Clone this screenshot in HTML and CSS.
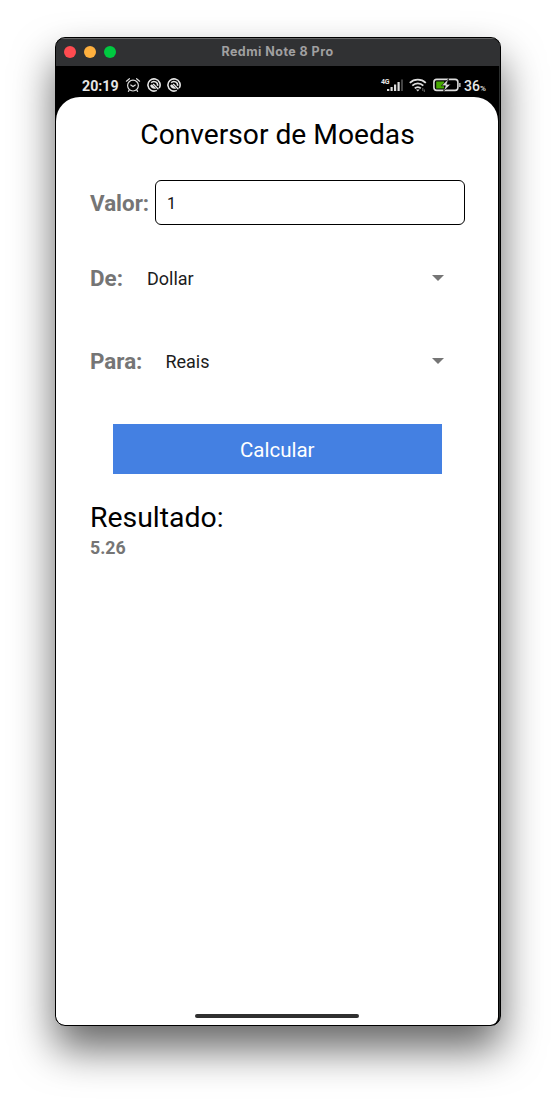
FILE: index.html
```html
<!DOCTYPE html>
<html lang="pt-BR">
<head>
<meta charset="utf-8">
<title>Conversor de Moedas</title>
<link rel="stylesheet" href="styles.css">
</head>
<body>
<div class="window">
  <header class="titlebar">
    <div class="lights"><i class="light red"></i><i class="light amber"></i><i class="light green"></i></div>
    <span class="device">Redmi Note 8 Pro</span>
  </header>
  <div class="phone">
    <div class="status">
      <span class="clock">20:19</span>
      <svg class="alarm" width="16" height="16" viewBox="0 0 16 16" fill="none" stroke="#ddd" stroke-width="1.2" stroke-linecap="round"><circle cx="8" cy="8.6" r="5.4"/><path d="M1.4 4.2 4.4 1.7M14.6 4.2 11.6 1.7M5.8 8l2.2 1.6L10.3 8M4.2 13.2 3.4 14.3M11.8 13.2l.8 1.1"/></svg>
      <svg class="badge" width="14" height="14" viewBox="0 0 14 14" fill="none" stroke="#e6e6e6"><path stroke-width="1.6" d="M9.8 12.4A6.1 6.1 0 1 1 12.2 10.2"/><path stroke-width="1.5" d="M4.2 4.8A3.7 3.7 0 0 1 10.6 7.8"/><path d="M6.2 6 11.4 11.2" stroke-width="1.3"/><path d="M3.2 7.2 5 6.2 9.2 10.4C6.5 11.6 3.5 10 3.2 7.2z" fill="#e6e6e6" stroke="none"/></svg>
      <svg class="badge second" width="14" height="14" viewBox="0 0 14 14" fill="none" stroke="#e6e6e6"><path stroke-width="1.6" d="M9.8 12.4A6.1 6.1 0 1 1 12.2 10.2"/><path stroke-width="1.5" d="M4.2 4.8A3.7 3.7 0 0 1 10.6 7.8"/><path d="M6.2 6 11.4 11.2" stroke-width="1.3"/><path d="M3.2 7.2 5 6.2 9.2 10.4C6.5 11.6 3.5 10 3.2 7.2z" fill="#e6e6e6" stroke="none"/></svg>
      <span class="network">4G</span>
      <svg class="signal" width="17" height="12" viewBox="0 0 17 12" fill="#ddd"><path d="M0 10h2.3v2H0zM3.5 8h2.2v4H3.5zM7 5.5h2.2V12H7zM10.5 3h2.2v9h-2.2z"/><path fill="#444" d="M14 .5h2V12h-2z"/></svg>
      <svg class="wifi" width="18" height="14" viewBox="0 0 18 14" fill="none" stroke="#ddd" stroke-width="1.8"><path d="M.8 4.9a11.5 11.5 0 0 1 16 0M3.3 7.7a7.8 7.8 0 0 1 11 0M5.8 10.3a4.2 4.2 0 0 1 6 0"/><path d="M7 11.4h3.6l-1.8 2.2z" fill="#ddd" stroke="none"/><path d="M13.8 10v3M15.3 11.5v2.5" stroke="#888" stroke-width=".8"/></svg>
      <svg class="battery" width="28" height="14" viewBox="0 0 28 14"><rect x=".9" y="1.4" width="24" height="11" rx="2.8" fill="none" stroke="#ddd" stroke-width="1.6"/><path fill="#46a900" d="M3.2 3.4H11v7H3.2z"/><path d="M15.8 .6 8.4 7.8h4L10.4 13.4l7.4-7.2h-4z" fill="#ddd" stroke="#000" stroke-width=".7"/><path d="M26.2 5h1.3v4h-1.3z" fill="#ddd"/></svg>
      <span class="charge">36<small>%</small></span>
    </div>
    <main class="screen">
      <h1 class="heading">Conversor de Moedas</h1>
      <div class="row value-row"><label class="label" for="valor">Valor:</label><div class="field" id="valor">1</div></div>
      <div class="row from-row"><span class="label">De:</span><span class="choice">Dollar</span><i class="caret"></i></div>
      <div class="row to-row"><span class="label">Para:</span><span class="choice">Reais</span><i class="caret"></i></div>
      <button class="calculate">Calcular</button>
      <h2 class="result-title">Resultado:</h2>
      <p class="result">5.26</p>
      <div class="home-bar"></div>
    </main>
  </div>
</div>
</body>
</html>
```
FILE: styles.css
```css
* { box-sizing: border-box; }
body { margin: 0; height: 1099px; overflow: hidden; background: #fff; font-family: Roboto, sans-serif; padding: 37px 55px 0; }
.window { width: 446px; height: 989px; display: flex; flex-direction: column; border: 1px solid #000; border-radius: 10px; overflow: hidden; background: linear-gradient(90deg, #000 443px, #2b2e2e 443px); box-shadow: 0 23px 42px rgba(0,0,0,.6); }
.titlebar { flex: none; height: 28px; background: #303133; border-top: 1px solid #666; display: grid; grid-template-columns: 100px 1fr 100px; align-items: center; }
.lights { display: flex; gap: 8px; padding-left: 8px; margin-top: -1px; }
.light { width: 12px; height: 12px; border-radius: 50%; }
.red { background: #ff4b50; }
.amber { background: #ffb03e; }
.green { background: #00c940; }
.device { font: 700 12.5px/24px Inter, sans-serif; letter-spacing: .45px; margin: -1px 1px 0 0; color: #a0a0a1; text-align: center; white-space: nowrap; }
.phone { width: 443px; height: 959px; display: flex; flex-direction: column; background: #000; }
.status { height: 31px; flex: none; display: flex; align-items: center; padding: 8px 0 0 26px; color: #e6e6e6; }
.clock { font-size: 14.2px; font-weight: 700; width: 43px; flex: none; padding: 1px 0 0; }
.status svg { flex: none; }
.alarm { margin-top: -1px; }
.badge { margin: -1px 0 0 6px; }
.second { margin-left: 6px; }
.network { font: 700 7px Roboto, sans-serif; margin: -7px 0 0 200px; width: 6px; flex: none; letter-spacing: -.2px; }
.signal { margin-top: -1px; }
.wifi { margin-left: 5px; margin-top: -1px; }
.battery { margin-left: 6px; margin-top: -1px; }
.charge { font-size: 14px; font-weight: 500; margin-left: 3px; padding-top: 1px; white-space: nowrap; }
.charge small { font-size: 8px; }
.screen { flex: 1; width: 442px; background: #fff; border-radius: 24px 24px 8px 8px; padding: 19px 33px 7px 34px; display: flex; flex-direction: column; }
.heading { margin: 0; font-size: 28.2px; line-height: 38px; font-weight: 400; text-align: center; color: #000; white-space: nowrap; }
.row { display: flex; align-items: center; height: 46px; }
.label { font-size: 22.4px; font-weight: 700; color: #757575; }
.value-row { margin-top: 25px; }
.value-row .label { padding-top: 1px; }
.field { margin-left: auto; width: 310px; height: 45px; border: 1px solid #000; border-radius: 6px; padding-left: 11px; font-size: 16px; line-height: 45px; color: #111; }
.from-row { margin-top: 30px; }
.to-row { margin-top: 37px; }
.choice { margin-left: 24px; font-size: 18px; color: #1c1c1c; }
.to-row .choice { margin-left: 23px; }
.caret { margin: -1px 21px 0 auto; border: solid transparent; border-width: 6px 6px 0; border-top-color: #757575; }
.calculate { margin: 40px 23px 0 22.5px; padding: 2px 0 0; height: 50px; flex: none; background: #4480e2; color: #fff; border: 0; font: 400 20.5px Roboto, sans-serif; }
.result-title { margin: 25px 0 0; font-size: 28.4px; line-height: 38px; font-weight: 400; color: #000; }
.result { margin: 0; font-size: 17.8px; line-height: 22px; font-weight: 700; color: #757575; }
.home-bar { width: 164px; height: 4px; border-radius: 2px; background: #303030; margin: auto auto 0 105px; }
```
